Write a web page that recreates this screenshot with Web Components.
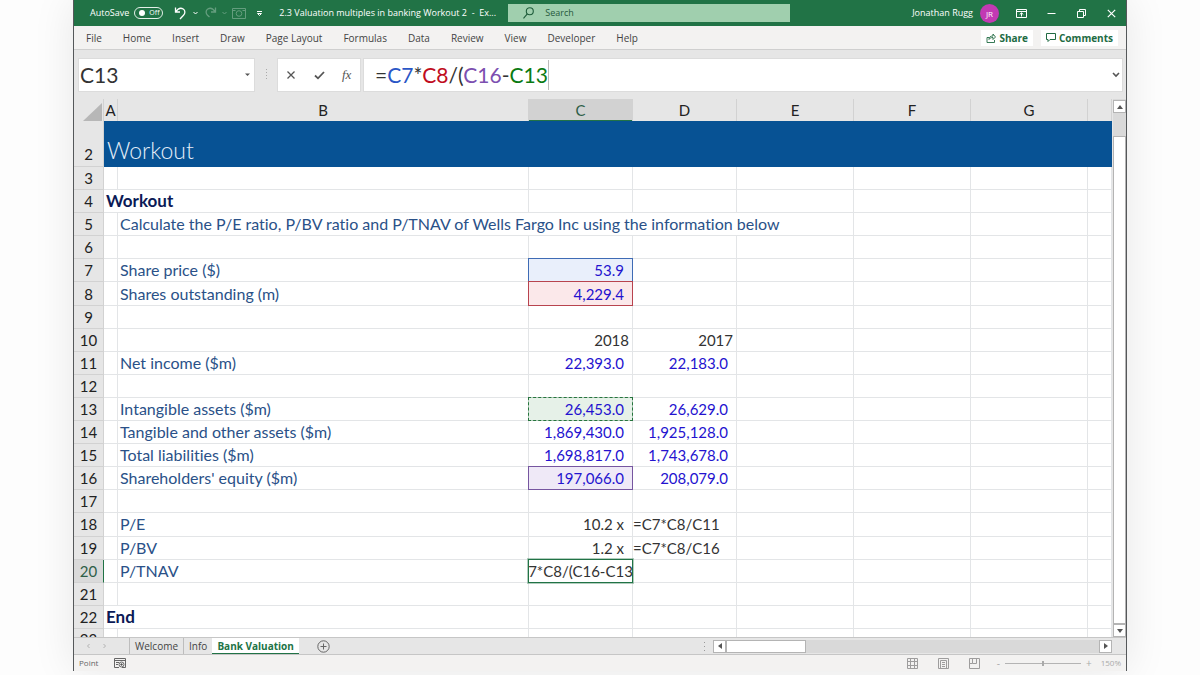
<!DOCTYPE html>
<html lang="en">
<head>
<meta charset="utf-8">
<title>2.3 Valuation multiples in banking Workout 2 - Excel</title>
<style>
  html, body {
    height: 100%;
    margin: 0;
  }
  body {
    --green: #217346;
    --chrome: #e6e6e6;
    --panel: #f3f2f1;
    --ui: "Open Sans", "Noto Sans", sans-serif;
    --cell: Lato, "Liberation Sans", sans-serif;
    background: #fdfdfd;
    font-family: var(--ui);
    font-size: 10px;
    font-variant-ligatures: none;
  }
</style>
</head>
<body>

<workbook-window>
  <title-bar slot="title" user="Jonathan Rugg" initials="JR">2.3 Valuation multiples in banking Workout 2&nbsp; -&nbsp; Ex...</title-bar>
  <ribbon-tabs slot="ribbon" tabs="File,Home,Insert,Draw,Page Layout,Formulas,Data,Review,View,Developer,Help"></ribbon-tabs>
  <formula-bar slot="formula" cell="C13">=<span style="color:#2a56c6">C7</span>*<span style="color:#c00c20">C8</span>/(<span style="color:#7c4fb0">C16</span>-<span style="color:#0a7a12">C13</span></formula-bar>
  <sheet-grid slot="sheet"></sheet-grid>
  <sheet-tabs slot="tabs" tabs="Welcome,Info,Bank Valuation" active="Bank Valuation"></sheet-tabs>
  <status-bar slot="status" zoom="150">Point</status-bar>
</workbook-window>

<script>
class WorkbookWindow extends HTMLElement {
  constructor() {
    super();
    this.attachShadow({ mode: 'open' });
    this.shadowRoot.innerHTML = `<style>
        :host {
          display: flex;
          box-sizing: border-box;
          height: 100vh;
          padding: 0 73px 4px;
        }
        main {
          flex: 1;
          min-width: 0;
          display: flex;
          flex-direction: column;
          border: solid #55585a;
          border-width: 0 1px;
          box-shadow: 0 0 40px rgba(0, 0, 0, .09);
        }
        ::slotted(sheet-grid) { flex: 1; min-height: 0; }
      </style>
      <main>
        <slot name="title"></slot>
        <slot name="ribbon"></slot>
        <slot name="formula"></slot>
        <slot name="sheet"></slot>
        <slot name="tabs"></slot>
        <slot name="status"></slot>
      </main>`;
  }
}

class TitleBar extends HTMLElement {
  constructor() {
    super();
    this.attachShadow({ mode: 'open' });
  }

  connectedCallback() {
    this.shadowRoot.innerHTML = `<style>
        :host {
          display: flex;
          align-items: center;
          height: 26px;
          background: var(--green);
          color: #fff;
          font-size: 9px;
          line-height: 16px;
          white-space: nowrap;
        }
        button {
          display: flex;
          padding: 0;
          border: 0;
          background: none;
          color: inherit;
        }
        svg { display: block; fill: none; stroke: currentColor; }
        .autosave { display: flex; align-items: center; gap: 5px; padding-left: 16px; }
        .switch {
          display: flex;
          align-items: center;
          gap: 4px;
          box-sizing: border-box;
          width: 29px;
          height: 12px;
          padding: 0 4px;
          border: 1px solid #e3efe8;
          border-radius: 6px;
        }
        .switch input {
          appearance: none;
          flex: none;
          width: 6px;
          height: 6px;
          margin: 0;
          border-radius: 50%;
          background: #fff;
        }
        .switch span { font-size: 7px; line-height: 10px; }
        .quick { display: flex; align-items: center; gap: 5px; padding: 0 16px 0 11px; }
        .dim { opacity: .3; }
        .file { flex: none; width: 216px; }
        .search {
          display: flex;
          align-items: center;
          gap: 11px;
          flex: 0 1 282px;
          box-sizing: border-box;
          height: 18px;
          margin-left: 13px;
          padding-left: 15px;
          background: #a0cfae;
          color: #1e5c3a;
        }
        .search input {
          flex: 1;
          min-width: 0;
          padding: 0;
          border: 0;
          background: none;
          font: inherit;
          outline: 0;
        }
        .search input::placeholder { color: #27593d; }
        .account { display: flex; align-items: center; gap: 7px; margin-left: auto; }
        .avatar {
          width: 19px;
          height: 19px;
          border-radius: 50%;
          background: #c239b3;
          font-size: 8px;
          line-height: 19px;
          text-align: center;
        }
        .controls { display: flex; align-items: center; gap: 20px; padding: 0 10px 0 17px; }
      </style>
      <label class="autosave">AutoSave
        <span class="switch"><input type="checkbox" role="switch"><span>Off</span></span>
      </label>
      <div class="quick">
        <button aria-label="Undo"><svg width="13" height="14" viewBox="0 0 13 14" stroke-width="1.3"><path d="M1.5 1.5v4.5h4.5M1.8 5.7C4 2.5 7 1.6 9.2 3c2.400 1.600 2 4.500.3 6.200L6 13"/></svg></button>
        <button aria-label="Undo list"><svg width="7" height="5" viewBox="0 0 7 5"><path d="M1.500 1l2 2 2-2"/></svg></button>
        <button class="dim" aria-label="Redo"><svg width="13" height="14" viewBox="0 0 13 14" stroke-width="1.3"><path d="M11.500 1.500v4.500H7M11.200 5.700C9 2.500 6 1.600 3.800 3c-2.400 1.600-2 4.500-.3 6.200L5.500 11"/></svg></button>
        <button class="dim" aria-label="Redo list"><svg width="5" height="5" viewBox="0 0 5 5"><path d="M.500 1l2 2 2-2"/></svg></button>
        <button class="dim" aria-label="Camera"><svg width="14" height="12" viewBox="0 0 14 12"><path d="M.5 1.500h13v10H.5zM.5 3.500h3M10.500 3.500h3"/><circle cx="7" cy="6.500" r="2.800"/></svg></button>
        <span></span>
        <button aria-label="Customize toolbar"><svg width="7" height="7" viewBox="0 0 7 7"><path d="M1 1.500h5M1.500 3.500l2 2 2-2z"/></svg></button>
      </div>
      <span class="file"><slot></slot></span>
      <label class="search">
        <svg width="11" height="12" viewBox="0 0 11 12" stroke-width="1.100"><circle cx="6.800" cy="4.200" r="3.500"/><path d="M4.300 6.800L.5 11.300"/></svg>
        <input type="search" aria-label="Search" placeholder="Search">
      </label>
      <div class="account"><span>${this.getAttribute('user')}</span><span class="avatar">${this.getAttribute('initials')}</span></div>
      <div class="controls">
        <button aria-label="Ribbon display options"><svg width="11" height="9" viewBox="0 0 11 9"><path d="M.5.500h10v8H.5zM.5 2.500h10M5.500 7.500V4M3.700 5.500l1.800-1.700 1.800 1.700"/></svg></button>
        <button aria-label="Minimize"><svg width="9" height="9" viewBox="0 0 9 9"><path d="M.5 4.500h8"/></svg></button>
        <button aria-label="Restore"><svg width="11" height="9" viewBox="0 0 11 9"><path d="M1.500 2.500h6v6h-6zM3.500 2.500v-2h6v6h-2"/></svg></button>
        <button aria-label="Close"><svg width="9" height="9" viewBox="0 0 9 9" stroke-width="1.200"><path d="M.8.800l7.400 7.400M8.200.8L.8 8.200"/></svg></button>
      </div>`;
  }
}

class RibbonTabs extends HTMLElement {
  constructor() {
    super();
    this.attachShadow({ mode: 'open' });
  }

  connectedCallback() {
    const tabs = this.getAttribute('tabs').split(',');
    this.shadowRoot.innerHTML = `<style>
        :host {
          display: flex;
          align-items: center;
          box-sizing: border-box;
          height: 24px;
          padding: 0 8px 0 12px;
          background: var(--panel);
          border-bottom: 1px solid #cfcfcf;
          white-space: nowrap;
        }
        nav { display: flex; flex: 1; gap: 21px; }
        button {
          padding: 0;
          border: 0;
          background: none;
          color: #444;
          font: 10px/16px var(--ui);
        }
        .actions { display: flex; gap: 8px; }
        .actions button {
          display: flex;
          align-items: center;
          gap: 3px;
          padding: 0 5px;
          background: #fff;
          color: #216b43;
          font-weight: 700;
        }
        svg { fill: none; stroke: currentColor; }
      </style>
      <nav>${tabs.map(t => `<button>${t}</button>`).join('')}</nav>
      <div class="actions">
        <button><svg width="10" height="10" viewBox="0 0 10 10"><path d="M3 4.500H1v5h7.500V7M3 6.500c0-2.500 1.500-3.500 4-3.500V1l2.500 3L7 6.500v-2c-2 0-3 .5-4 2z" stroke-width=".9"/></svg>Share</button>
        <button><svg width="10" height="9" viewBox="0 0 10 9"><path d="M.5.500h9v6H4L2 8.500v-2H.5z"/></svg>Comments</button>
      </div>`;
  }
}

class FormulaBar extends HTMLElement {
  constructor() {
    super();
    this.attachShadow({ mode: 'open' });
  }

  connectedCallback() {
    this.shadowRoot.innerHTML = `<style>
        :host {
          display: flex;
          align-items: center;
          box-sizing: border-box;
          height: 49px;
          padding: 0 3px 0 4px;
          background: var(--chrome);
          color: #333;
        }
        .box {
          display: flex;
          align-items: center;
          box-sizing: border-box;
          height: 34px;
          background: #fff;
          border: 1px solid #dcdcdc;
        }
        .name { width: 177px; padding: 0 3px 0 1px; }
        .name input {
          flex: 1;
          min-width: 0;
          padding: 0;
          border: 0;
          outline: 0;
          color: inherit;
          font: 21px/30px var(--cell);
        }
        .grip { width: 22px; text-align: center; }
        .grip svg { fill: #aaa; }
        .tools { gap: 17px; width: 84px; padding: 0 8px; }
        button {
          display: flex;
          padding: 0;
          border: 0;
          background: none;
          color: #555;
          font: italic 13px/16px "Liberation Serif", serif;
        }
        svg { fill: none; stroke: #555; }
        .grip svg { stroke: none; }
        .formula { flex: 1; margin-left: 2px; padding: 0 2px 0 11px; }
        .text { flex: 1; font: 21px/30px var(--cell); outline: 0; }
        .caret { border-right: 1px solid #bbb; display: inline-block; }
      </style>
      <div class="box name">
        <input aria-label="Name box" value="${this.getAttribute('cell')}">
        <button aria-label="Names"><svg width="7" height="4" viewBox="0 0 7 4"><path d="M1 .500h5L3.500 3z" style="fill:#555;stroke:none"/></svg></button>
      </div>
      <span class="grip"><svg width="3" height="11" viewBox="0 0 3 11"><path d="M1 1h1v1H1zM1 4h1v1H1zM1 7h1v1H1zM1 10h1v1H1z"/></svg></span>
      <div class="box tools">
        <button aria-label="Cancel"><svg width="11" height="10" viewBox="0 0 11 10" stroke-width="1.300"><path d="M1.500 1.500l7 7M8.500 1.500l-7 7"/></svg></button>
        <button aria-label="Enter"><svg width="11" height="10" viewBox="0 0 11 10" stroke-width="1.800"><path d="M1 5.500L4 8.300 10 2"/></svg></button>
        <button aria-label="Insert function">fx</button>
      </div>
      <div class="box formula">
        <div class="text" role="textbox" aria-label="Formula" contenteditable="true" spellcheck="false"><span class="caret"><slot></slot></span></div>
        <button aria-label="Expand formula bar"><svg width="8" height="6" viewBox="0 0 8 6" stroke-width="1.600"><path d="M1 1l3 3 3-3"/></svg></button>
      </div>`;
  }
}

class ScrollBar extends HTMLElement {
  constructor() {
    super();
    this.attachShadow({ mode: 'open' });
    this.shadowRoot.innerHTML = `<style>
        :host { display: flex; background: #d9d9d9; }
        :host([vertical]) { flex-direction: column; width: 13px; }
        :host(:not([vertical])) { height: 13px; }
        button {
          display: grid;
          place-items: center;
          box-sizing: border-box;
          flex: none;
          width: 13px;
          height: 13px;
          padding: 0;
          background: #fff;
          border: 1px solid #b4b4b4;
        }
        :host(:not([vertical])) svg { transform: rotate(-90deg); }
        svg { fill: #555; }
        .track { flex: 1; display: flex; min-height: 0; }
        .thumb { box-sizing: border-box; background: #fff; border: 1px solid #b4b4b4; }
        :host(:not([vertical])) .thumb { width: 80px; }
        :host([vertical]) .thumb { width: 13px; margin-top: 23px; }
      </style>
      <button aria-label="Scroll back"><svg width="6" height="4" viewBox="0 0 6 4"><path d="M0 4h6L3 0z"/></svg></button>
      <div class="track"><div class="thumb"></div></div>
      <button aria-label="Scroll forward"><svg width="6" height="4" viewBox="0 0 6 4"><path d="M0 0h6L3 4z"/></svg></button>`;
  }
}

// Each row: [number, cells]. A cell is [column span, class, text].
const blank = n => Array.from({ length: n }, () => [1, '', '']);
const line = (label, c, d) => [[1, '', ''], [1, 'label', label], c || [1, '', ''], d || [1, '', ''], ...blank(4)];
const num = (text, mark = '') => [1, `num ${mark}`, text];

const ROWS = [
  [2, [[8, 'banner', 'Workout']]],
  [3, blank(8)],
  [4, [[2, 'heading', 'Workout'], ...blank(6)]],
  [5, [[1, '', ''], [4, 'label', 'Calculate the P/E ratio, P/BV ratio and P/TNAV of Wells Fargo Inc using the information below'], ...blank(3)]],
  [6, blank(8)],
  [7, line('Share price ($)', num('53.9', 'ref blue'))],
  [8, line('Shares outstanding (m)', num('4,229.4', 'ref red'))],
  [9, blank(8)],
  [10, line('', [1, 'year', '2018'], [1, 'year', '2017'])],
  [11, line('Net income ($m)', num('22,393.0'), num('22,183.0'))],
  [12, blank(8)],
  [13, line('Intangible assets ($m)', num('26,453.0', 'ref green'), num('26,629.0'))],
  [14, line('Tangible and other assets ($m)', num('1,869,430.0'), num('1,925,128.0'))],
  [15, line('Total liabilities ($m)', num('1,698,817.0'), num('1,743,678.0'))],
  [16, line("Shareholders' equity ($m)", num('197,066.0', 'ref purple'), num('208,079.0'))],
  [17, blank(8)],
  [18, line('P/E', [1, 'result', '10.2 x'], [1, 'formula', '=C7*C8/C11'])],
  [19, line('P/BV', [1, 'result', '1.2 x'], [1, 'formula', '=C7*C8/C16'])],
  [20, line('P/TNAV', [1, 'ref editing', '7*C8/(C16-C13'])],
  [21, blank(8)],
  [22, [[2, 'heading', 'End'], ...blank(6)]],
  [23, blank(8)]
];

class SheetGrid extends HTMLElement {
  constructor() {
    super();
    this.attachShadow({ mode: 'open' });
    this.shadowRoot.innerHTML = `<style>
        :host { display: flex; background: var(--chrome); }
        .view { flex: 1; min-width: 0; overflow: hidden; }
        table {
          table-layout: fixed;
          width: 100%;
          height: 100%;
          border-spacing: 0;
          font: 15px/22px var(--cell);
          font-variant-ligatures: none;
          background: #fff;
        }
        .rows { width: 30px; }
        .a { width: 14px; }
        .b { width: 411px; }
        .c { width: 104px; }
        .e { width: 117px; }
        th, td {
          padding: 0;
          white-space: nowrap;
          border: solid #e3e5e7;
          border-width: 0 1px 1px 0;
        }
        th {
          background: var(--chrome);
          border-color: #d2d2d2;
          color: #222;
          font-weight: 400;
        }
        thead tr { height: 22px; }
        thead th { border-bottom: 0; }
        thead th.on { background: #d2d2d2; color: #2f5f48; box-shadow: inset 0 -1px var(--green); }
        tbody th.on { background: #dadada; color: #2f5f48; border-right-color: var(--green); }
        .corner svg { display: block; margin: 3px 1px 0 auto; fill: #b7b7b7; }
        .tall { height: 46px; }
        .tall th { padding-bottom: 1px; vertical-align: bottom; }
        .banner {
          padding: 13px 0 0 3px;
          background: #075294;
          border-color: #075294;
          color: #e4eef8;
          font-size: 23px;
          font-weight: 300;
          line-height: 32px;
        }
        .heading { padding-left: 2px; color: #0b1a56; font-weight: 700; font-size: 17px; }
        .label { padding-left: 2px; color: #2a5188; font-size: 16px; }
        .num { padding-right: 8px; color: #2412cf; text-align: right; }
        .year { padding-right: 3px; color: #333; text-align: right; }
        .result { padding-right: 8px; color: #333; text-align: right; }
        .formula { color: #333; }
        /* reference frames sit over the gridlines on all four sides */
        .ref { position: relative; }
        .ref::after { content: ""; position: absolute; inset: -1px; border: 1px solid; }
        .blue { background: #e9effb; }
        .blue::after { border-color: #3f6bb5; }
        .red { background: #fbe8ea; }
        .red::after { border-color: #b8434e; }
        .green { background: #e6f1e8; }
        .green::after { border: 1px dashed #1d6b35; outline: 1px solid rgba(60, 140, 80, .3); outline-offset: -1px; }
        .purple { background: #efe9f7; }
        .purple::after { border-color: #7656a0; }
        .editing { color: #333; }
        .editing div { display: flex; justify-content: center; }
        .editing::after { border-color: var(--green); outline: 1px solid rgba(33, 115, 70, .35); }
        .cut { height: 8px; }
        .cut th, .cut td { border-bottom: 0; }
        .cut div { height: 8px; overflow: hidden; line-height: 20px; }
        scroll-bar { flex: none; margin-left: 1px; padding-top: 1px; }
      </style>
      <div class="view">
        <table>
          <colgroup><col class="rows"><col class="a"><col class="b"><col class="c"><col class="c"><col class="e"><col class="e"><col class="e"><col></colgroup>
          <thead></thead>
          <tbody></tbody>
        </table>
      </div>
      <scroll-bar vertical></scroll-bar>`;
  }

  connectedCallback() {
    const corner = '<th class="corner"><svg width="19" height="18" viewBox="0 0 19 18"><path d="M19 0v18H0z"/></svg></th>';
    const letters = ['A', 'B', 'C', 'D', 'E', 'F', 'G', ''];
    this.shadowRoot.querySelector('thead').innerHTML =
      `<tr>${corner}${letters.map(l => `<th${l === 'C' ? ' class="on"' : ''}>${l}</th>`).join('')}</tr>`;
    this.shadowRoot.querySelector('tbody').innerHTML = ROWS.map(row => this._row(row)).join('');
  }

  _row([number, cells]) {
    const size = { 2: 'tall', 23: 'cut' }[number] || '';
    const tds = cells.map(([span, name, text]) =>
      `<td colspan="${span}" class="${name}"><div>${name.includes('editing') ? `<span>${text}</span>` : text}</div></td>`);
    return `<tr class="${size}"><th${number === 20 ? ' class="on"' : ''}><div>${number}</div></th>${tds.join('')}</tr>`;
  }
}

class SheetTabs extends HTMLElement {
  constructor() {
    super();
    this.attachShadow({ mode: 'open' });
  }

  connectedCallback() {
    const active = this.getAttribute('active');
    const tabs = this.getAttribute('tabs').split(',');
    this.shadowRoot.innerHTML = `<style>
        :host {
          display: flex;
          align-items: center;
          box-sizing: border-box;
          height: 18px;
          padding-right: 14px;
          background: var(--chrome);
          border: solid #c6c6c6;
          border-width: 1px 0;
          white-space: nowrap;
        }
        button {
          display: flex;
          padding: 0;
          border: 0;
          background: none;
          color: #444;
          font: 10px/16px var(--ui);
        }
        svg { fill: none; stroke: #666; }
        .step { display: flex; gap: 11px; width: 43px; padding-left: 12px; opacity: .4; }
        .tab { padding: 0 5px; border-left: 1px solid #bdbdbd; }
        .tab.on {
          border: 0;
          background: #fff;
          color: var(--green);
          font-weight: 700;
          box-shadow: inset 0 -1px var(--green);
        }
        .add { margin-left: 18px; }
        .grip { margin-left: auto; padding-right: 7px; color: #888; }
        .grip svg { display: block; fill: #999; stroke: none; }
        scroll-bar { flex: 0 0 399px; }
      </style>
      <div class="step">
        <button aria-label="Previous sheet"><svg width="5" height="6" viewBox="0 0 5 6"><path d="M3.500 1l-2 2 2 2"/></svg></button>
        <button aria-label="Next sheet"><svg width="5" height="6" viewBox="0 0 5 6"><path d="M1.500 1l2 2-2 2"/></svg></button>
      </div>
      ${tabs.map(t => `<button class="tab${t === active ? ' on' : ''}">${t}</button>`).join('')}
      <button class="add" aria-label="New sheet"><svg width="13" height="13" viewBox="0 0 13 13"><circle cx="6.500" cy="6.500" r="5.700"/><path d="M6.500 3.500v6M3.500 6.500h6"/></svg></button>
      <span class="grip"><svg width="3" height="9" viewBox="0 0 3 9"><path d="M1 0h1v1H1zM1 4h1v1H1zM1 8h1v1H1z"/></svg></span>
      <scroll-bar></scroll-bar>`;
  }
}

class StatusBar extends HTMLElement {
  constructor() {
    super();
    this.attachShadow({ mode: 'open' });
  }

  connectedCallback() {
    const zoom = this.getAttribute('zoom');
    this.shadowRoot.innerHTML = `<style>
        :host {
          display: flex;
          align-items: center;
          height: 16px;
          padding: 0 5px;
          background: var(--panel);
          color: #666;
          font-size: 8px;
          line-height: 14px;
        }
        button { display: flex; padding: 0; border: 0; background: none; color: inherit; font: 10px/12px var(--ui); }
        svg { fill: none; stroke: #666; }
        .record { flex: 1; padding-left: 16px; }
        .views { display: flex; gap: 20px; opacity: .6; }
        .zoom { display: flex; align-items: center; gap: 5px; padding: 0 9px 0 17px; color: #aaa; }
        input {
          appearance: none;
          width: 76px;
          height: 9px;
          margin: 0;
          background: linear-gradient(#b4b4b4, #b4b4b4) center / 100% 1px no-repeat;
        }
        input::-webkit-slider-thumb { appearance: none; width: 2px; height: 5px; background: #aaa; }
        output { color: #aaa; }
      </style>
      <slot></slot>
      <div class="record"><button aria-label="Record macro"><svg width="12" height="10" viewBox="0 0 12 10"><path d="M5 9.500H.5v-9h11v9H8M.5 2.500h11M2 4.500h3M2 6.500h2"/><circle cx="7.500" cy="6.500" r="2.500"/><circle cx="7.500" cy="6.500" r=".8" style="fill:#444"/></svg></button></div>
      <div class="views">
        <button aria-label="Normal view"><svg width="11" height="11" viewBox="0 0 11 11"><path d="M.5.500h10v10H.5zM.5 3.500h10M.5 7.500h10M3.500.500v10M7.500.500v10"/></svg></button>
        <button aria-label="Page layout view"><svg width="11" height="11" viewBox="0 0 11 11"><path d="M.5.500h10v10H.5zM2.500 2.500h6v8M2.500 2.500v8M4 4.500h3M4 6.500h3M4 8.500h3"/></svg></button>
        <button aria-label="Page break view"><svg width="11" height="11" viewBox="0 0 11 11"><path d="M.5.500h10v10H.5zM3.500.500v5h4v-5M.5 5.500h3"/></svg></button>
      </div>
      <div class="zoom">
        <button aria-label="Zoom out">-</button>
        <input type="range" min="0" max="300" value="${zoom}" aria-label="Zoom">
        <button aria-label="Zoom in">+</button>
      </div>
      <output>${zoom}%</output>`;
  }
}

customElements.define('scroll-bar', ScrollBar);
customElements.define('title-bar', TitleBar);
customElements.define('ribbon-tabs', RibbonTabs);
customElements.define('formula-bar', FormulaBar);
customElements.define('sheet-grid', SheetGrid);
customElements.define('sheet-tabs', SheetTabs);
customElements.define('status-bar', StatusBar);
customElements.define('workbook-window', WorkbookWindow);
</script>
</body>
</html>
